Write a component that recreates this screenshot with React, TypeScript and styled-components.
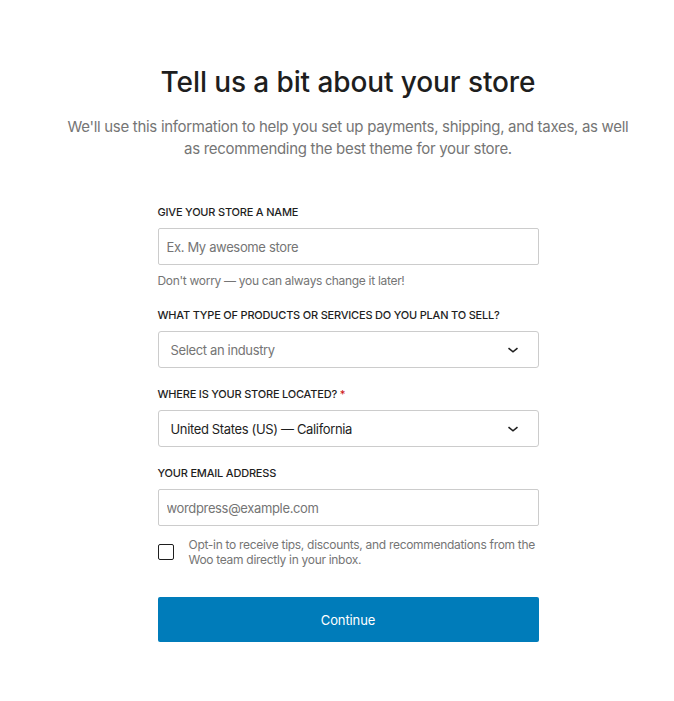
import styled, { createGlobalStyle } from "styled-components";

const GlobalStyle = createGlobalStyle`
    html, body {
        margin: 0;
        padding: 0;
        background: #ffffff;
    }
    body {
        font-family: Inter, "Noto Sans", "Liberation Sans", sans-serif;
        color: #1e1e1e;
        letter-spacing: -0.3px;
        -webkit-font-smoothing: antialiased;
    }
`;

interface LabelProps {
    required?: boolean;
    children: React.ReactNode;
}

function FieldLabel({ required, children }: LabelProps) {
    return (
        <Label>
            {children}
            {required && <Required> *</Required>}
        </Label>
    );
}

function Chevron() {
    return (
        <svg width="20" height="20" viewBox="0 0 20 20" fill="none">
            <path d="M5.5 8.2 10 11.8l4.5-3.6" stroke="#1e1e1e" strokeWidth="1.6" fill="none" />
        </svg>
    );
}

interface SelectProps {
    value: string;
    placeholder?: boolean;
}

function SelectBox({ value, placeholder }: SelectProps) {
    return (
        <SelectControl>
            <SelectValue $placeholder={placeholder}>{value}</SelectValue>
            <Chevron />
        </SelectControl>
    );
}

function App() {
    return (
        <>
            <GlobalStyle />
            <Page>
                <Header>
                    <Title>Tell us a bit about your store</Title>
                    <Subtitle>
                        We'll use this information to help you set up payments, shipping, and taxes, as well
                        as recommending the best theme for your store.
                    </Subtitle>
                </Header>

                <Form>
                    <Field>
                        <FieldLabel>Give your store a name</FieldLabel>
                        <TextInput placeholder="Ex. My awesome store" />
                        <Help>Don't worry — you can always change it later!</Help>
                    </Field>

                    <Field>
                        <FieldLabel>What type of products or services do you plan to sell?</FieldLabel>
                        <SelectBox value="Select an industry" placeholder />
                    </Field>

                    <Field>
                        <FieldLabel required>Where is your store located?</FieldLabel>
                        <SelectBox value="United States (US) — California" />
                    </Field>

                    <Field $last>
                        <FieldLabel>Your email address</FieldLabel>
                        <TextInput placeholder="wordpress@example.com" />
                    </Field>

                    <OptIn>
                        <Checkbox type="checkbox" />
                        <OptInText>
                            Opt-in to receive tips, discounts, and recommendations from the Woo team directly in
                            your inbox.
                        </OptInText>
                    </OptIn>

                    <ContinueButton type="button">Continue</ContinueButton>
                </Form>
            </Page>
        </>
    );
}

const Page = styled.div`
    display: flex;
    flex-direction: column;
    align-items: center;
    padding: 62px 0 60px 22px;
`;

const Header = styled.div`
    display: flex;
    flex-direction: column;
    align-items: center;
    text-align: center;
    width: 566px;
`;

const Title = styled.h1`
    margin: 0;
    font-size: 28px;
    line-height: 40px;
    font-weight: 500;
    color: #1e1e1e;
    letter-spacing: -0.1px;
`;

const Subtitle = styled.p`
    margin: 14px 0 0;
    font-size: 15px;
    line-height: 22px;
    color: #757575;
    font-weight: 400;
`;

const Form = styled.div`
    width: 381px;
    margin-top: 44px;
    display: flex;
    flex-direction: column;
`;

const Field = styled.div<{ $last?: boolean }>`
    display: flex;
    flex-direction: column;
    margin-bottom: ${({ $last }) => ($last ? "11px" : "18px")};
`;

const Label = styled.label`
    font-size: 11px;
    line-height: 16px;
    font-weight: 500;
    text-transform: uppercase;
    color: #1e1e1e;
    letter-spacing: -0.2px;
    margin-bottom: 8px;
`;

const Required = styled.span`
    color: #cc1818;
`;

const TextInput = styled.input`
    box-sizing: border-box;
    height: 37px;
    width: 100%;
    padding: 0 8px;
    border: 1px solid #cccccc;
    border-radius: 2px;
    font-family: inherit;
    font-size: 13px;
    letter-spacing: -0.35px;
    color: #1e1e1e;
    outline: none;

    &::placeholder {
        color: #757575;
    }
`;

const Help = styled.p`
    margin: 8px 0 0;
    font-size: 12px;
    line-height: 16px;
    color: #757575;
`;

const SelectControl = styled.div`
    box-sizing: border-box;
    height: 37px;
    display: flex;
    align-items: center;
    justify-content: space-between;
    padding: 0 15px 0 12px;
    border: 1px solid #cccccc;
    border-radius: 3px;
`;

const SelectValue = styled.span<{ $placeholder?: boolean }>`
    font-size: 13px;
    letter-spacing: -0.35px;
    color: ${({ $placeholder }) => ($placeholder ? "#757575" : "#1e1e1e")};
`;

const OptIn = styled.div`
    display: flex;
    align-items: flex-start;
    gap: 15px;
    margin-bottom: 30px;
`;

const Checkbox = styled.input`
    appearance: none;
    box-sizing: border-box;
    flex: 0 0 auto;
    width: 16px;
    height: 16px;
    margin: 7px 0 0;
    border: 1px solid #1e1e1e;
    border-radius: 2px;
    background: #fff;
`;

const OptInText = styled.span`
    font-size: 12px;
    line-height: 15px;
    color: #757575;
`;

const ContinueButton = styled.button`
    height: 45px;
    width: 100%;
    border: none;
    border-radius: 2px;
    background: #007cba;
    color: #ffffff;
    font-family: inherit;
    font-size: 13px;
    letter-spacing: -0.1px;
    font-weight: 400;
    cursor: pointer;
`;

export default App;
